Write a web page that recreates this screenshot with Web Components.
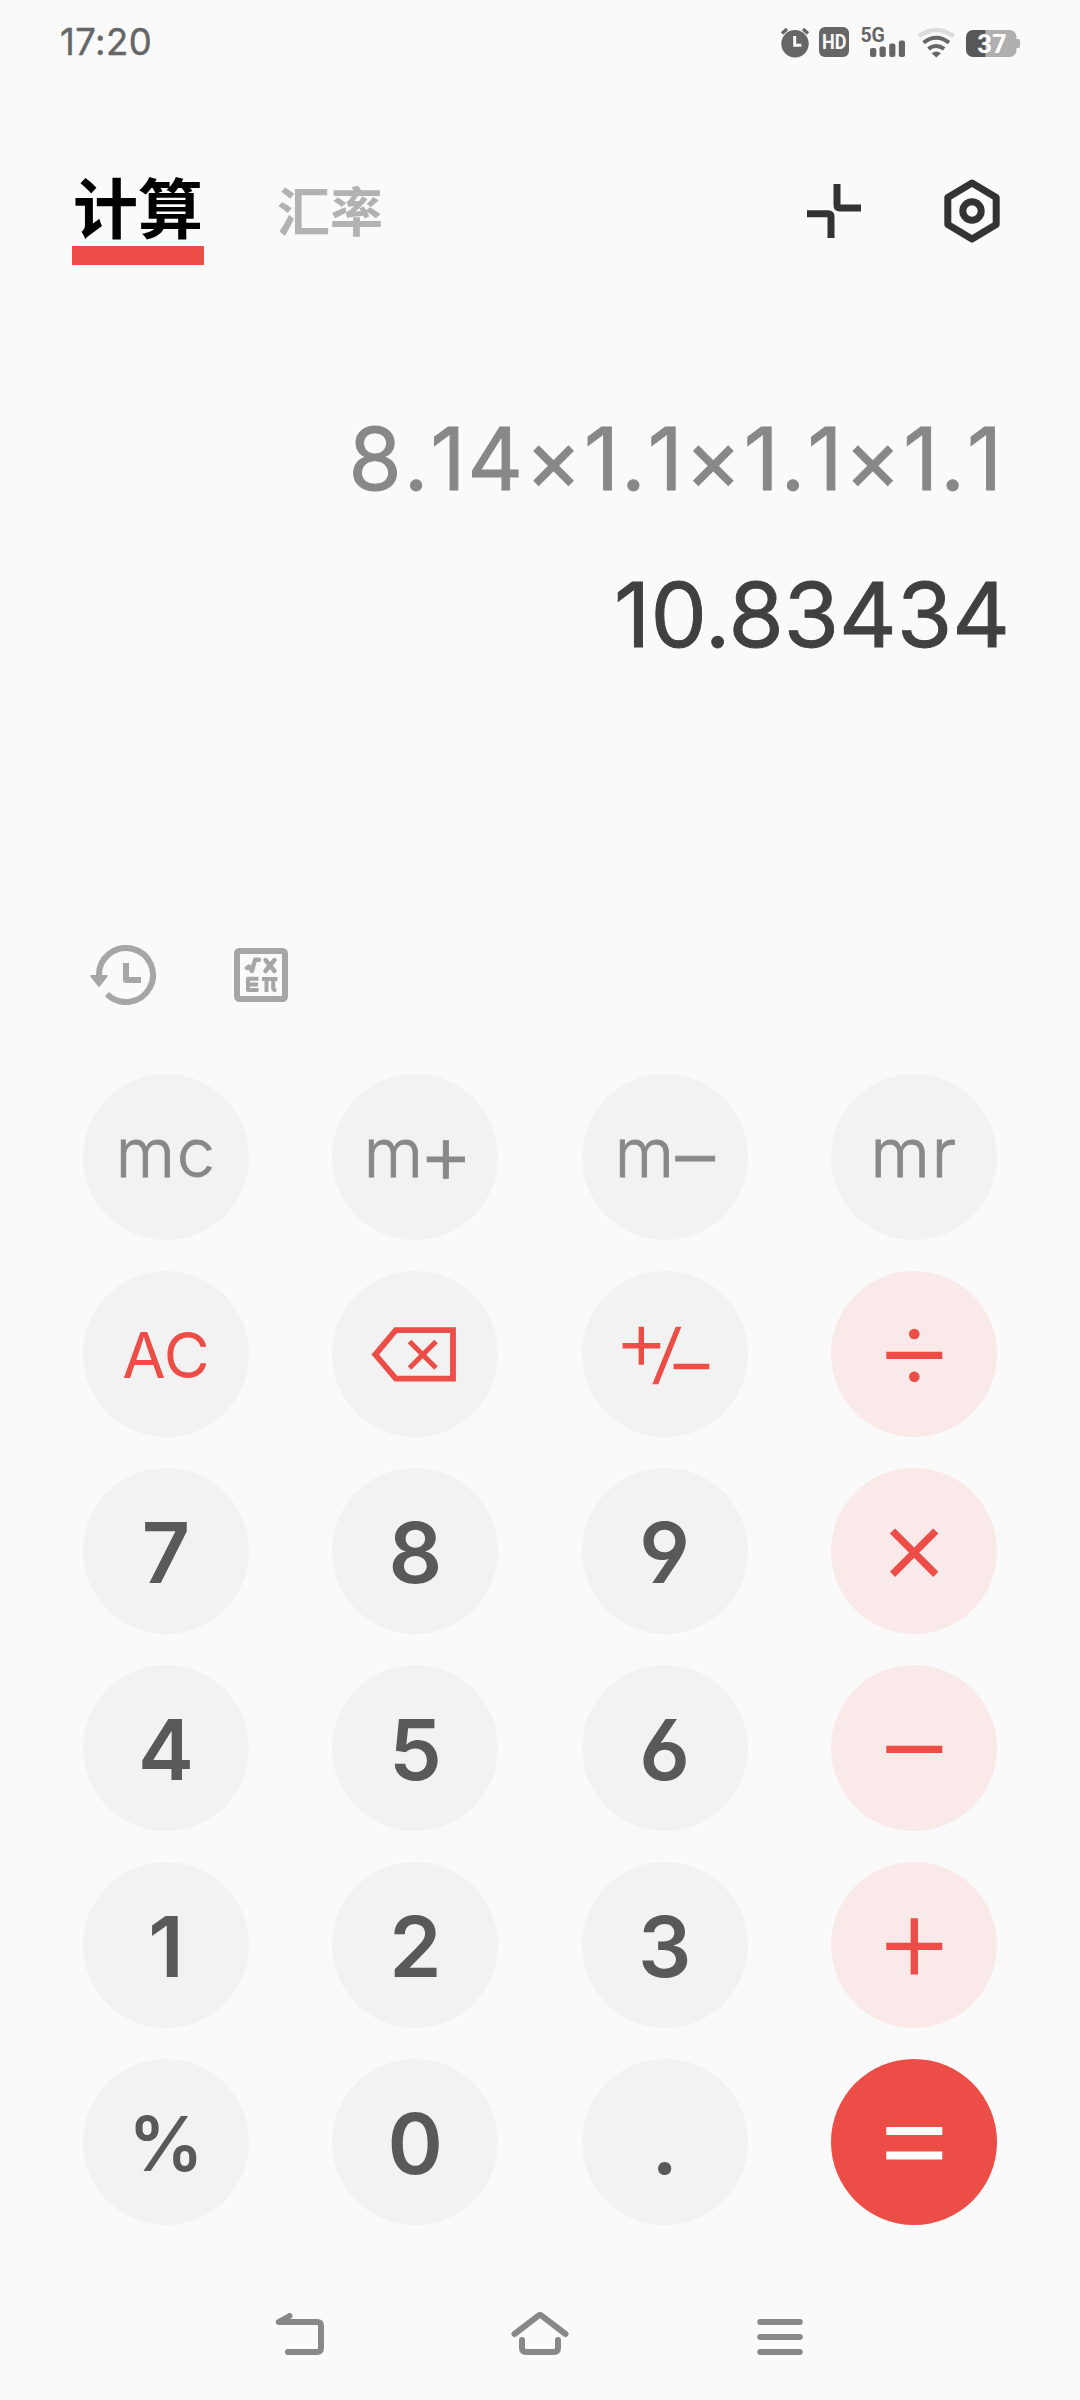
<!DOCTYPE html>
<html lang="zh-CN">
<head>
<meta charset="utf-8">
<title>计算</title>
<style>
    * { box-sizing: border-box; }
    body {
        margin: 0;
        width: 1080px;
        height: 2400px;
        background: #fafafa;
        font-family: Inter, Roboto, "Noto Sans CJK SC", sans-serif;
        overflow: hidden;
    }
</style>
</head>
<body>
<calc-app></calc-app>

<script>
class StatusBar extends HTMLElement {
    connectedCallback() {
        this.attachShadow({ mode: 'open' });
        this.shadowRoot.innerHTML = `
            <style>
                :host {
                    display: flex;
                    justify-content: space-between;
                    height: 84px;
                    padding: 0 60px 0 60px;
                    color: #666;
                }
                .time {
                    font-size: 36.5px;
                    line-height: 85px;
                    letter-spacing: 0.4px;
                    -webkit-text-stroke: 0.4px currentColor;
                }
                .icons {
                    display: flex;
                    padding-top: 24px;
                }
                svg { display: block; }
                text {
                    font-family: Roboto, sans-serif;
                    font-weight: 700;
                }
            </style>
            <span class="time">17:20</span>
            <div class="icons">
                <svg width="240" height="36" viewBox="780 24 240 36">
                    <circle cx="795" cy="43.7" r="13.7" fill="#666"/>
                    <path d="M782 33.5l5-4.5M808 33.5l-5-4.5" stroke="#666" stroke-width="3.4" fill="none"/>
                    <path d="M794.7 36v9.2h6.6" stroke="#fafafa" stroke-width="3" fill="none"/>
                    <rect x="819" y="27" width="30" height="30" rx="6" fill="#666"/>
                    <text x="822" y="48.8" font-size="19.5" textLength="24.5" lengthAdjust="spacingAndGlyphs" fill="#fafafa">HD</text>
                    <text x="860.4" y="41.8" font-size="20.5" textLength="24.5" lengthAdjust="spacingAndGlyphs" fill="#666">5G</text>
                    <g fill="#666">
                        <rect x="870" y="48" width="6.3" height="9" rx="2"/>
                        <rect x="879.5" y="46.6" width="6.3" height="10.4" rx="2"/>
                        <rect x="889.2" y="43.6" width="6.2" height="13.4" rx="2"/>
                        <rect x="898.8" y="40.6" width="6.2" height="16.4" rx="2"/>
                    </g>
                    <g fill="none" stroke="#666" stroke-width="4">
                        <path d="M919 36.2Q936.2 23.8 953.6 36.2" stroke="#dcdcdc" stroke-width="4.6"/>
                        <path d="M923.6 42.6Q936.2 33 949 42.6"/>
                        <path d="M928.4 48.9Q936.2 43 944.2 48.9"/>
                    </g>
                    <path d="M931.6 53.2Q936.3 50 941 53.2L936.3 57.4z" fill="#666"/>
                    <path d="M1014 39h4q2.200 0 2.200 2.200v4.600q0 2.200-2.200 2.200h-4z" fill="#afafaf"/>
                    <path d="M985 30h24.500a7 7 0 0 1 7 7v13a7 7 0 0 1-7 7H985z" fill="#afafaf"/>
                    <path d="M985.300 30H973a7 7 0 0 0-7 7v13a7 7 0 0 0 7 7h12.300z" fill="#575757"/>
                    <text x="977.2" y="52.6" font-size="25" textLength="29.500" lengthAdjust="spacingAndGlyphs" fill="#fff">37</text>
                </svg>
            </div>
        `;
    }
}
customElements.define('status-bar', StatusBar);

class CalcHeader extends HTMLElement {
    connectedCallback() {
        this.attachShadow({ mode: 'open' });
        this.shadowRoot.innerHTML = `
            <style>
                :host {
                    display: flex;
                    justify-content: space-between;
                    height: 196px;
                    padding: 84px 80px 0 72px;
                    font-family: "Noto Sans CJK SC", sans-serif;
                    font-weight: 700;
                }
                .tabs {
                    display: flex;
                    align-items: flex-start;
                    gap: 73px;
                }
                .active {
                    width: 132px;
                    height: 97px;
                    border-bottom: 19px solid #ec4d46;
                    box-sizing: border-box;
                    font-size: 65px;
                    line-height: 74px;
                    text-align: center;
                    white-space: nowrap;
                    color: #000;
                }
                .tab {
                    font-size: 53px;
                    line-height: 82px;
                    color: #b2b2b2;
                }
                .actions {
                    display: flex;
                    gap: 83px;
                    padding-top: 10px;
                }
            </style>
            <div class="tabs">
                <div class="active">计算</div>
                <div class="tab">汇率</div>
            </div>
            <div class="actions">
                <svg width="54" height="66" viewBox="807 178 54 66" fill="none" stroke="#333" stroke-width="7" stroke-linejoin="round">
                    <path d="M837 184v21q0 3 3 3h21M807 213.800h21q3 0 3 3v21.200"/>
                </svg>
                <svg width="56" height="66" viewBox="944 178 56 66" fill="none" stroke="#333" stroke-width="7" stroke-linejoin="round">
                    <path d="M972 183l24.200 14.400v27.200L972 239l-24.200-14.400v-27.200z"/>
                    <circle cx="972" cy="211" r="9.200"/>
                </svg>
            </div>
        `;
    }
}
customElements.define('calc-header', CalcHeader);

class CalcDisplay extends HTMLElement {
    connectedCallback() {
        this.attachShadow({ mode: 'open' });
        this.shadowRoot.innerHTML = `
            <style>
                :host {
                    display: flex;
                    flex-direction: column;
                    align-items: flex-end;
                    height: 654px;
                    padding: 125px 70px 0 0;
                    white-space: nowrap;
                    -webkit-text-stroke: 0.9px currentColor;
                }
                .expression {
                    font-size: 86px;
                    line-height: 108px;
                    font-kerning: none;
                    letter-spacing: 2px;
                    color: #888;
                    margin: 0 6px 48px 0;
                }
                .result {
                    font-size: 89.5px;
                    line-height: 108px;
                    color: #404040;
                }
            </style>
            <div class="expression"><slot name="expression"></slot></div>
            <div class="result"><slot name="result"></slot></div>
        `;
    }
}
customElements.define('calc-display', CalcDisplay);

class CalcTools extends HTMLElement {
    connectedCallback() {
        this.attachShadow({ mode: 'open' });
        this.shadowRoot.innerHTML = `
            <style>
                :host {
                    display: flex;
                    gap: 76px;
                    height: 140px;
                    padding: 11px 0 0 90px;
                }
            </style>
            <svg width="68" height="60" viewBox="90 945 68 60" fill="none" stroke="#a6a6a6" stroke-width="6">
                <path d="M99 976A27 27 0 1 1 107 994.200"/>
                <path d="M126 963v17h15" stroke-linejoin="round"/>
                <path d="M91.200 976h15.600l-7.800 10z" fill="#a6a6a6" stroke-width="2" stroke-linejoin="round"/>
            </svg>
            <svg width="54" height="60" viewBox="234 945 54 60" fill="none" stroke="#a6a6a6" stroke-width="6">
                <rect x="237" y="951" width="48" height="48" rx="2.500"/>
                <g stroke-width="4.400" stroke-linecap="round" stroke-linejoin="round">
                    <path d="M247 968l2-1.500 3 4.500 3-11.300h4"/>
                    <path d="M265.500 960l9 11M274.500 960l-9 11"/>
                </g>
                <g stroke-width="4" stroke-linejoin="round">
                    <path d="M258.500 978.800h-10.500v11.200h10.500M248 984.400h10"/>
                    <path d="M262 979h15.500M266.500 979v13M273.200 979v9.500q0 1.500 3.200 1.800"/>
                </g>
            </svg>
        `;
    }
}
customElements.define('calc-tools', CalcTools);

class CalcKey extends HTMLElement {
    connectedCallback() {
        this.attachShadow({ mode: 'open' });
        this.shadowRoot.innerHTML = `
            <style>
                :host {
                    display: flex;
                    align-items: center;
                    justify-content: center;
                    box-sizing: border-box;
                    width: 166px;
                    height: 166px;
                    border-radius: 50%;
                    background: #f2f2f2;
                    color: #595959;
                    font-size: 84px;
                    font-weight: 600;
                    font-feature-settings: "cv03", "cv04";
                    line-height: 1;
                    padding-top: 4px;
                    white-space: nowrap;
                }
                :host([kind="memory"]) {
                    color: #888;
                    font-size: 68.5px;
                    font-weight: 300;
                    letter-spacing: 1.5px;
                    padding: 0 0 8px;
                    -webkit-text-stroke: 0.8px currentColor;
                }
                /* plus and dash sit lower and wider than the letters */
                ::slotted(.plus),
                ::slotted(.dash) {
                    font-size: 83px;
                    font-weight: 300;
                    line-height: 0;
                    letter-spacing: 0;
                    vertical-align: -6px;
                    margin: 0 -6px 0 -6px;
                }
                ::slotted(.dash) {
                    font-size: 78px;
                    vertical-align: -6px;
                    margin: 0;
                }
                :host([kind="clear"]) {
                    color: #ec4d46;
                    font-size: 63px;
                    font-weight: 400;
                    padding-top: 3px;
                }
                :host([kind="percent"]) {
                    font-size: 75px;
                    font-weight: 600;
                    padding-top: 2px;
                }
                :host([kind="edit"]) {
                    color: #ec4d46;
                    padding: 0;
                }
                :host([kind="operator"]) {
                    background: #f9e9e8;
                    color: #ec4d46;
                    padding: 0;
                }
                :host([kind="equals"]) {
                    background: #ec4d46;
                    color: #fff;
                    padding: 0;
                }
            </style>
            <div><slot></slot></div>
        `;
    }
}
customElements.define('calc-key', CalcKey);

// Stroke icons, drawn on the 166px face of a key
const ICONS = {
    backspace: '<path stroke-width="5.800" d="M121 59.200H63.800L43.300 83.600 63.800 107.600H121z"/><path stroke-width="5" d="M77.500 70.500l26.500 26.500M104 70.500l-26.500 26.500"/>',
    sign: '<path stroke-width="5.400" d="M40.600 74.700h37.700M59.300 55.700v38M91.600 95.500h35.700"/><path fill="currentColor" stroke="none" d="M93.700 55.700h5.700L76.300 113.200h-6z"/>',
    divide: '<path stroke-width="7.300" d="M55.300 84.400h56"/><g fill="currentColor" stroke="none"><circle cx="83.300" cy="63" r="5.300"/><circle cx="83.300" cy="105.700" r="5.300"/></g>',
    multiply: '<path stroke-width="7.300" d="M61.500 63l43.300 43.300M104.800 63L61.500 106.300"/>',
    minus: '<path stroke-width="7.300" d="M55.300 84.400h56"/>',
    plus: '<path stroke-width="7.300" d="M55.300 84.400h56M83.300 56.300v56.200"/>',
    equals: '<path stroke-width="7.800" d="M55.300 72h56M55.300 96.500h56"/>'
};

class KeyIcon extends HTMLElement {
    connectedCallback() {
        this.attachShadow({ mode: 'open' });
        this.shadowRoot.innerHTML = `
            <style>
                :host { display: block; }
                svg { display: block; }
            </style>
            <svg width="166" height="166" viewBox="0 0 166 166" fill="none" stroke="currentColor">
                ${ICONS[this.getAttribute('name')]}
            </svg>
        `;
    }
}
customElements.define('key-icon', KeyIcon);

class CalcKeypad extends HTMLElement {
    connectedCallback() {
        this.attachShadow({ mode: 'open' });
        this.shadowRoot.innerHTML = `
            <style>
                :host {
                    display: grid;
                    grid-template-columns: repeat(4, 166px);
                    grid-auto-rows: 166px;
                    justify-content: space-between;
                    row-gap: 31px;
                    padding: 0 83px;
                }
            </style>
            <calc-key kind="memory">mc</calc-key>
            <calc-key kind="memory">m<span class="plus">+</span></calc-key>
            <calc-key kind="memory">m<span class="dash">–</span></calc-key>
            <calc-key kind="memory">mr</calc-key>
            <calc-key kind="clear">AC</calc-key>
            <calc-key kind="edit"><key-icon name="backspace"></key-icon></calc-key>
            <calc-key kind="edit"><key-icon name="sign"></key-icon></calc-key>
            <calc-key kind="operator"><key-icon name="divide"></key-icon></calc-key>
            <calc-key>7</calc-key>
            <calc-key>8</calc-key>
            <calc-key>9</calc-key>
            <calc-key kind="operator"><key-icon name="multiply"></key-icon></calc-key>
            <calc-key>4</calc-key>
            <calc-key>5</calc-key>
            <calc-key>6</calc-key>
            <calc-key kind="operator"><key-icon name="minus"></key-icon></calc-key>
            <calc-key>1</calc-key>
            <calc-key>2</calc-key>
            <calc-key>3</calc-key>
            <calc-key kind="operator"><key-icon name="plus"></key-icon></calc-key>
            <calc-key kind="percent">%</calc-key>
            <calc-key>0</calc-key>
            <calc-key>.</calc-key>
            <calc-key kind="equals"><key-icon name="equals"></key-icon></calc-key>
        `;
    }
}
customElements.define('calc-keypad', CalcKeypad);

class NavBar extends HTMLElement {
    connectedCallback() {
        this.attachShadow({ mode: 'open' });
        this.shadowRoot.innerHTML = `
            <style>
                :host {
                    display: grid;
                    grid-template-columns: repeat(3, 60px);
                    justify-content: center;
                    column-gap: 180px;
                    padding-top: 80px;
                }
            </style>
            <svg width="60" height="60" viewBox="270 2305 60 60" fill="none" stroke="#888" stroke-width="6" stroke-linecap="round" stroke-linejoin="round">
                <path d="M289.500 2316l-10.700 6H317q4 0 4 4v22q0 4-4 4h-29"/>
            </svg>
            <svg width="60" height="60" viewBox="510 2305 60 60" fill="none" stroke="#888" stroke-width="6" stroke-linecap="round" stroke-linejoin="round">
                <path d="M514.500 2334L538.500 2315.600q1.500-1.100 3 0L565.500 2334"/>
                <path d="M522 2340v8q0 4 4 4h28q4 0 4-4v-8"/>
            </svg>
            <svg width="60" height="60" viewBox="750 2305 60 60" fill="none" stroke="#888" stroke-width="6" stroke-linecap="round">
                <path d="M760.300 2322h39.500M760.300 2337h39.500M760.300 2352h39.500"/>
            </svg>
        `;
    }
}
customElements.define('nav-bar', NavBar);

class CalcApp extends HTMLElement {
    connectedCallback() {
        this.attachShadow({ mode: 'open' });
        this.shadowRoot.innerHTML = `
            <style>
                :host {
                    display: flex;
                    flex-direction: column;
                    width: 1080px;
                    height: 2400px;
                }
                status-bar, calc-header, calc-display, calc-tools, calc-keypad, nav-bar {
                    box-sizing: border-box;
                    flex: none;
                }
            </style>
            <status-bar></status-bar>
            <calc-header></calc-header>
            <calc-display>
                <span slot="expression">8.14×1.1×1.1×1.1</span>
                <span slot="result">10.83434</span>
            </calc-display>
            <calc-tools></calc-tools>
            <calc-keypad></calc-keypad>
            <nav-bar></nav-bar>
        `;
    }
}
customElements.define('calc-app', CalcApp);
</script>
</body>
</html>
